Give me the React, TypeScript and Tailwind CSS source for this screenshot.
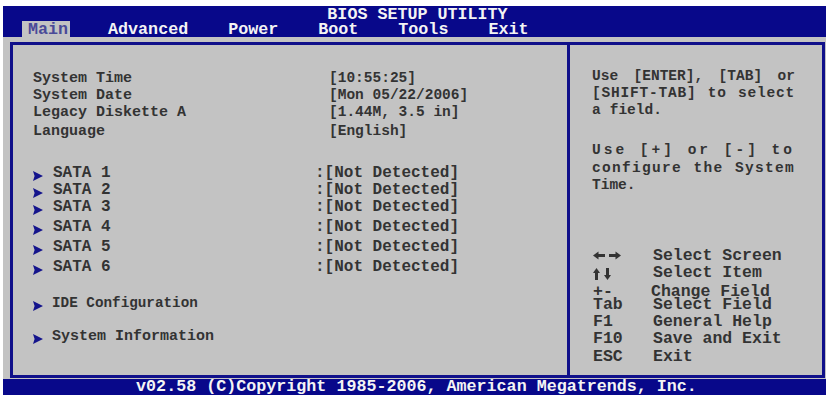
import React from 'react'

const fields = [
  { label: 'System Time', value: '[10:55:25]', gap: 'mt-0' },
  { label: 'System Date', value: '[Mon 05/22/2006]', gap: 'mt-0' },
  { label: 'Legacy Diskette A', value: '[1.44M, 3.5 in]', gap: 'mt-0' },
  { label: 'Language', value: '[English]', gap: 'mt-[2px]' },
]

const satas = [
  { label: 'SATA 1', gap: 'mt-[25px]' },
  { label: 'SATA 2', gap: 'mt-0' },
  { label: 'SATA 3', gap: 'mt-0' },
  { label: 'SATA 4', gap: 'mt-[3px]' },
  { label: 'SATA 5', gap: 'mt-[3px]' },
  { label: 'SATA 6', gap: 'mt-[3px]' },
]

// help text is justified letter by letter in the original, so each line gets its own spacing
const help = [
  { words: ['Use', '[ENTER],', '[TAB]', 'or'], cls: 'justify-between tracking-[0px] mt-0' },
  { words: ['[SHIFT-TAB]', 'to', 'select'], cls: 'justify-between tracking-[0.8px] mt-0' },
  { words: ['a', 'field.'], cls: 'gap-[9px] tracking-[0px] mt-0' },
  { words: ['Use', '[+]', 'or', '[-]', 'to'], cls: 'justify-between tracking-[3px] mt-[23px]' },
  { words: ['configure', 'the', 'System'], cls: 'justify-between tracking-[1.3px] mt-[1px]' },
  { words: ['Time.'], cls: 'tracking-[0px] mt-0' },
]

function Marker() {
  return (
    <svg width="10" height="10" viewBox="0 0 10 10" className="mt-[4px] shrink-0">
      <path d="M0 0 L10 5 L0 10 L1.6 5 Z" fill="#14148c" />
    </svg>
  )
}

function LeftRight() {
  return (
    <svg width="28" height="9" viewBox="0 0 28 9">
      <polygon points="0,4.5 5.5,0.5 5.5,8.5" fill="#333" />
      <rect x="5" y="3" width="7" height="3" fill="#333" />
      <polygon points="28,4.5 22.5,0.5 22.5,8.5" fill="#333" />
      <rect x="16" y="3" width="7" height="3" fill="#333" />
    </svg>
  )
}

function UpDown() {
  return (
    <svg width="18" height="12" viewBox="0 0 18 12">
      <polygon points="3.5,0 0,5 7,5" fill="#333" />
      <rect x="2" y="4.5" width="3" height="7.5" fill="#333" />
      <polygon points="14.5,12 11,7 18,7" fill="#333" />
      <rect x="13" y="0" width="3" height="7.5" fill="#333" />
    </svg>
  )
}

const keys: { key: React.ReactNode; desc: string; row: string; descCls?: string }[] = [
  { key: <LeftRight />, desc: 'Select Screen', row: 'h-[17px]' },
  { key: <UpDown />, desc: 'Select Item', row: 'h-[19px]' },
  { key: '+-', desc: 'Change Field', row: 'h-[13px]', descCls: '-ml-[2px]' },
  { key: 'Tab', desc: 'Select Field', row: 'h-[17px]' },
  { key: 'F1', desc: 'General Help', row: 'h-[17px]' },
  { key: 'F10', desc: 'Save and Exit', row: 'h-[18px]' },
  { key: 'ESC', desc: 'Exit', row: 'h-[17px]' },
]

export default function App() {
  return (
    <div className="w-[829px] h-[395px] bg-white pt-[6px] px-[3px] font-['Liberation_Mono',monospace] font-bold overflow-hidden">
      {/* title + tabs */}
      <div className="h-[31px] bg-[#08088a] text-[#f4f4f4]">
        <div className="h-[15px] leading-[17px] text-[16.7px] text-center pl-[6px]">BIOS SETUP UTILITY</div>
        <div className="flex h-[16px] leading-[18px] text-[16.7px] pl-[19px]">
          <span className="bg-[#c3c3c3] text-[#4a4a98] pl-[6px] pr-[2px]">Main</span>
          <span className="ml-[38px]">Advanced</span>
          <span className="ml-[40px]">Power</span>
          <span className="ml-[40px]">Boot</span>
          <span className="ml-[40px]">Tools</span>
          <span className="ml-[40px]">Exit</span>
        </div>
      </div>

      {/* body */}
      <div className="h-[342px] bg-[#c3c3c3] pt-[5px] pl-[7px] pr-[1px] pb-[1px]">
        <div className="flex h-full border-[3px] border-[#10108a] text-[#333]">
          <div className="w-[557px] border-r-[3px] border-[#10108a] pl-[20px] pt-[25px]">
            {fields.map((f) => (
              <div key={f.label} className={`flex h-[17px] leading-[17px] text-[15px] ${f.gap}`}>
                <span className="w-[296px] shrink-0">{f.label}</span>
                <span className="text-[14.5px]">{f.value}</span>
              </div>
            ))}
            {satas.map((s) => (
              <div key={s.label} className={`flex items-center h-[17px] leading-[17px] text-[16px] ${s.gap}`}>
                <span className="w-[20px] shrink-0 flex">
                  <Marker />
                </span>
                <span className="w-[262px] shrink-0">{s.label}</span>
                <span>:[Not Detected]</span>
              </div>
            ))}
            <div className="flex items-center h-[17px] leading-[17px] text-[14.3px] mt-[19px]">
              <span className="w-[19px] shrink-0 flex">
                <Marker />
              </span>
              <span>IDE Configuration</span>
            </div>
            <div className="flex items-center h-[17px] leading-[17px] text-[15px] mt-[16px]">
              <span className="w-[19px] shrink-0 flex">
                <Marker />
              </span>
              <span>System Information</span>
            </div>
          </div>

          <div className="flex-1 pl-[22px] pt-[23px]">
            <div className="w-[203px] text-[14.5px]">
              {help.map((line, i) => (
                <div key={i} className={`flex h-[17px] leading-[17px] ${line.cls}`}>
                  {line.words.map((w) => (
                    <span key={w}>{w}</span>
                  ))}
                </div>
              ))}
            </div>
            <div className="mt-[53px] pl-[1px] text-[16.5px]">
              {keys.map((k) => (
                <div key={k.desc} className={`flex ${k.row} leading-[17px]`}>
                  <span className="w-[60px] shrink-0 flex items-start h-[17px] pt-0">
                    {typeof k.key === 'string' ? k.key : <span className="mt-[4px]">{k.key}</span>}
                  </span>
                  <span className={`whitespace-pre ${k.descCls ?? ''}`}>{k.desc}</span>
                </div>
              ))}
            </div>
          </div>
        </div>
      </div>

      {/* footer */}
      <div className="h-[16px] leading-[16px] bg-[#08088a] text-[#f4f4f4] text-[16.7px] text-center pl-[4px] whitespace-pre">
        v02.58 (C)Copyright 1985-2006, American Megatrends, Inc.
      </div>
    </div>
  )
}
